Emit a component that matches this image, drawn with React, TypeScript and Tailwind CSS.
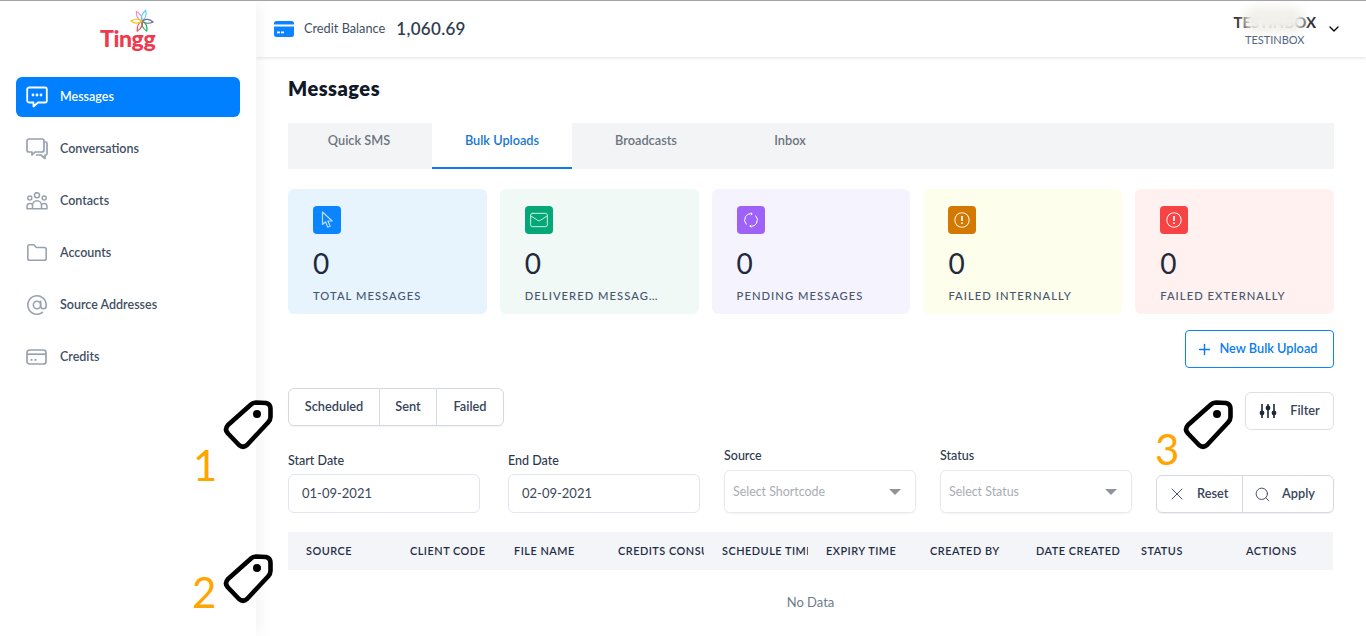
import { AtSign, ChevronDown, Folder, Mail, Plus, Search, X } from "lucide-react";
import type { ReactNode } from "react";

function MessageIcon() {
  return (
    <svg width="22" height="22" viewBox="0 0 22 22" fill="none" stroke="currentColor" strokeWidth="1.8" strokeLinejoin="round">
      <path d="M3 1.500h16a1.800 1.800 0 0 1 1.800 1.800v11.400a1.800 1.800 0 0 1-1.800 1.800h-7l-4.500 4v-4H3a1.800 1.800 0 0 1-1.800-1.800V3.300A1.800 1.800 0 0 1 3 1.500z" />
      <circle cx="7" cy="9" r="0.5" fill="currentColor" />
      <circle cx="11" cy="9" r="0.5" fill="currentColor" />
      <circle cx="15" cy="9" r="0.5" fill="currentColor" />
    </svg>
  );
}

function ConversationsIcon() {
  return (
    <svg width="22" height="22" viewBox="0 0 22 22" fill="none" stroke="currentColor" strokeWidth="1.7" strokeLinejoin="round">
      <path d="M3 1h13a2 2 0 0 1 2 2v9a2 2 0 0 1-2 2H9l-3 3v-3H3a2 2 0 0 1-2-2V3a2 2 0 0 1 2-2z" />
      <path d="M18 4h1.500A1.500 1.500 0 0 1 21 5.500v10a1.500 1.500 0 0 1-1.500 1.500H19v3.500L15 17h-5" />
    </svg>
  );
}

function ContactsIcon() {
  return (
    <svg width="22" height="18" viewBox="0 0 22 18" fill="none" stroke="currentColor" strokeWidth="1.5" strokeLinejoin="round">
      <circle cx="11" cy="3.200" r="2.500" />
      <circle cx="3.800" cy="6" r="2" />
      <circle cx="18.200" cy="6" r="2" />
      <path d="M6.500 16.800v-3.600a4.500 4.500 0 0 1 9 0v3.600z" />
      <path d="M6.500 16.800H1v-2.300a3 3 0 0 1 5.600-1.500" />
      <path d="M15.500 16.800H21v-2.300a3 3 0 0 0-5.600-1.500" />
    </svg>
  );
}

function CardIcon({ solid }: { solid?: boolean }) {
  if (solid) {
    return (
      <svg width="20" height="16" viewBox="0 0 20 16">
        <rect x="0" y="0" width="20" height="16" rx="2.500" fill="#0a84ff" />
        <rect x="0" y="3.500" width="20" height="2" fill="#fff" />
        <rect x="3" y="10.500" width="3" height="1.800" fill="#fff" />
        <rect x="7" y="10.500" width="3" height="1.800" fill="#fff" />
      </svg>
    );
  }
  return (
    <svg width="21" height="16" viewBox="0 0 21 16" fill="none" stroke="currentColor" strokeWidth="1.7">
      <rect x="1" y="1" width="19" height="14" rx="2.500" />
      <path d="M1 5.200h19" />
      <path d="M4.500 10.800h2M8.500 10.800h2" />
    </svg>
  );
}

function SlidersIcon() {
  return (
    <svg width="18" height="16" viewBox="0 0 18 16" fill="#1f2937" stroke="#1f2937" strokeWidth="1.600">
      <path d="M3 1v14M9 1v14M15 1v14" />
      <circle cx="3" cy="10" r="1.600" />
      <circle cx="9" cy="5" r="1.600" />
      <circle cx="15" cy="10" r="1.600" />
    </svg>
  );
}

function CursorIcon() {
  return (
    <svg width="13" height="18" viewBox="0 0 13 18" fill="none" stroke="#b9dcff" strokeWidth="1.200" strokeLinejoin="round">
      <path d="M1.500 1v12.500l3-2.700 2.300 5.400 2.400-1-2.300-5.200h4.300z" />
    </svg>
  );
}

function SyncIcon() {
  return (
    <svg width="16" height="16" viewBox="0 0 16 16" fill="none" stroke="#fff" strokeWidth="1" strokeLinecap="round" strokeLinejoin="round">
      <path d="M3.200 12.200A6.300 6.300 0 0 1 9 1.800" />
      <path d="M12.800 3.800A6.300 6.300 0 0 1 7 14.200" />
      <path d="M8 .9l1.100 1-1 1M8 15.100l-1.100-1 1-1" />
    </svg>
  );
}

function AlertIcon() {
  return (
    <svg width="16" height="16" viewBox="0 0 16 16" fill="none" stroke="#fff" strokeWidth="1.100" strokeOpacity="0.85">
      <circle cx="8" cy="8" r="7.200" />
      <path d="M8 4v5" strokeWidth="1.700" strokeOpacity="1" />
      <path d="M8 10.500v1.600" strokeWidth="1.700" strokeOpacity="1" />
    </svg>
  );
}

function TagMark({ className }: { className: string }) {
  return (
    <svg className={className} width="50" height="50" viewBox="0 0 50 50" fill="none">
      <path
        d="M33 2.500 L43 3 Q47.500 4 47.500 9 L47.500 17 Q47.500 20 45 22.500 L24 45 Q20 48.500 16 45 L5 33.500 Q1 29.500 5 25 L28 4.500 Q30 2.500 33 2.500 Z"
        stroke="#000"
        strokeWidth="4.600"
        strokeLinejoin="round"
        fill="#fff"
      />
      <circle cx="34" cy="14" r="4" fill="#000" />
    </svg>
  );
}

function Pinwheel() {
  const petals = [
    { angle: -30, color: "#f58ac6" },
    { angle: 20, color: "#4fd0f5" },
    { angle: 95, color: "#6b6a9c" },
    { angle: 155, color: "#16b25a" },
    { angle: 205, color: "#ef4056" },
    { angle: 270, color: "#f9c31c" },
  ];
  return (
    <svg width="24" height="24" viewBox="-13 -13 26 26" fill="none">
      {petals.map((p) => (
        <path
          key={p.angle}
          d="M0 0C-3-3-3-8 0-12C2.500-8 2.500-3 0 0z"
          stroke={p.color}
          strokeWidth="1.300"
          transform={`rotate(${p.angle})`}
        />
      ))}
    </svg>
  );
}

function NavItem({ icon, label, active }: { icon: ReactNode; label: string; active?: boolean }) {
  return (
    <div
      className={
        active
          ? "flex h-10 items-center rounded-md bg-[#0080ff] pl-2.5 text-white"
          : "flex h-10 items-center rounded-md pl-2.5 text-[#3f4f63]"
      }
    >
      <span className={active ? "flex w-[34px] justify-start" : "flex w-[34px] justify-start text-[#98a1ae]"}>{icon}</span>
      <span className="text-[12.500px] font-semibold">{label}</span>
    </div>
  );
}

function StatCard({ bg, iconBg, icon, label }: { bg: string; iconBg: string; icon: ReactNode; label: string }) {
  return (
    <div className={`h-[125px] rounded-md px-[25px] pt-[17px] ${bg}`}>
      <div className={`flex size-7 items-center justify-center rounded ${iconBg}`}>{icon}</div>
      <div className="mt-[10px] text-[28px] leading-[38px] text-[#1f2a3c]">0</div>
      <div className="mt-[6px] truncate text-[11.200px] leading-4 font-medium tracking-[1.050px] text-[#46566c]">{label}</div>
    </div>
  );
}

function SelectBox({ label, placeholder }: { label: string; placeholder: string }) {
  return (
    <div className="w-48">
      <div className="text-[12.500px] leading-[18px] font-medium text-[#2d3a4d]">{label}</div>
      <div className="mt-[5px] flex h-[43px] items-center justify-between rounded-md border border-[#e6e9ef] pr-[14px] pl-2 shadow-[0_1px_2px_rgba(0,0,0,0.05)]">
        <span className="pt-[2px] text-[12.400px] text-[#a9adb3]">{placeholder}</span>
        <span className="h-0 w-0 border-x-[6px] border-t-[6px] border-x-transparent border-t-[#8f949b]" />
      </div>
    </div>
  );
}

function DateBox({ label, value }: { label: string; value: string }) {
  return (
    <div className="w-48">
      <div className="text-[12.500px] leading-[18px] font-medium text-[#2d3a4d]">{label}</div>
      <div className="mt-[4px] flex h-[39px] items-center rounded-md border border-[#e1e6ef] pl-[13px] text-[13px] text-[#3a485c]">
        {value}
      </div>
    </div>
  );
}

const columns = [
  { name: "SOURCE", width: "w-[104px] pl-[18px] pr-[18px]" },
  { name: "CLIENT CODE", width: "w-[104px] pl-[18px] pr-[8px]" },
  { name: "FILE NAME", width: "w-[104px] pl-[18px] pr-[18px]" },
  { name: "CREDITS CONSUMED", width: "w-[104px] pl-[18px] pr-[18px]" },
  { name: "SCHEDULE TIME", width: "w-[104px] pl-[18px] pr-[18px]" },
  { name: "EXPIRY TIME", width: "w-[104px] pl-[18px] pr-[8px]" },
  { name: "CREATED BY", width: "w-[106px] pl-[18px] pr-[8px]" },
  { name: "DATE CREATED", width: "w-[105px] pl-[18px] pr-[4px]" },
  { name: "STATUS", width: "w-[105px] pl-[18px] pr-[18px]" },
  { name: "ACTIONS", width: "w-[105px] pl-[18px] pr-[18px]" },
];

export default function App() {
  return (
    <div className="relative flex h-[636px] overflow-hidden border-t border-[#a3a3a3] bg-white font-['Lato',sans-serif]">
      <aside className="relative z-10 w-[256px] shrink-0 bg-white px-4 shadow-[0_0_18px_rgba(0,0,0,0.07)]">
        <div className="relative mx-auto h-[76px] w-[56px]">
          <div className="absolute top-[8px] left-[30px]">
            <Pinwheel />
          </div>
          <div className="absolute top-[20px] left-0 text-[23px] leading-[34px] font-black tracking-[-0.4px] text-[#f0394d]">
            Tingg
          </div>
        </div>
        <nav className="flex flex-col gap-3">
          <NavItem active icon={<MessageIcon />} label="Messages" />
          <NavItem icon={<ConversationsIcon />} label="Conversations" />
          <NavItem icon={<ContactsIcon />} label="Contacts" />
          <NavItem icon={<Folder size={22} strokeWidth={1.7} />} label="Accounts" />
          <NavItem icon={<AtSign size={22} strokeWidth={1.7} />} label="Source Addresses" />
          <NavItem icon={<CardIcon />} label="Credits" />
        </nav>
      </aside>

      <div className="min-w-0 flex-1">
        <header className="flex h-[56px] items-center justify-between pr-[24px] pl-[18px] shadow-[0_1px_3px_rgba(0,0,0,0.12)]">
          <div className="flex items-center">
            <CardIcon solid />
            <span className="ml-[10px] text-[12.750px] text-[#3f4f63]">Credit Balance</span>
            <span className="ml-[11px] text-[17px] font-semibold tracking-[0.3px] text-[#2f3d50]">1,060.69</span>
          </div>
          <div className="flex items-center gap-[10px]">
            <div className="relative text-center">
              <div className="text-[15px] leading-[20px] font-bold text-[#2b2b2b]">TESTINBOX</div>
              <div className="absolute top-[-5px] left-[10px] h-[26px] w-[62px] rounded-full bg-[#f1f0ea] blur-[5px]" />
              <div className="relative text-[11px] leading-[15px] text-[#52677f]">TESTINBOX</div>
            </div>
            <ChevronDown size={16} strokeWidth={2} className="text-black" />
          </div>
        </header>

        <main className="pr-[32px] pl-[32px]">
          <h1 className="mt-[18px] text-[20px] leading-[26px] font-extrabold tracking-[0.5px] text-[#111827]">Messages</h1>

          <div className="mt-[22px] flex h-[46px] bg-[#f3f4f6] text-[12.750px] font-semibold text-[#6b7480]">
            <div className="w-[142px] pt-[8px] text-center">Quick SMS</div>
            <div className="ml-[2px] w-[140px] border-b-2 border-[#0a7cf0] bg-white pt-[8px] text-center text-[#1677d2]">Bulk Uploads</div>
            <div className="w-[148px] pt-[8px] text-center">Broadcasts</div>
            <div className="w-[140px] pt-[8px] text-center">Inbox</div>
          </div>

          <div className="mt-[20px] grid grid-cols-5 gap-[13px]">
            <StatCard bg="bg-[#e7f4fe]" iconBg="bg-[#0a84ff]" icon={<CursorIcon />} label="TOTAL MESSAGES" />
            <StatCard bg="bg-[#f0f9f6]" iconBg="bg-[#04a777]" icon={<Mail size={20} strokeWidth={1.2} className="text-[#c9f0e3]" />} label="DELIVERED MESSAG…" />
            <StatCard bg="bg-[#f5f3fe]" iconBg="bg-[#9f62f8]" icon={<SyncIcon />} label="PENDING MESSAGES" />
            <StatCard bg="bg-[#fefeec]" iconBg="bg-[#d37800]" icon={<AlertIcon />} label="FAILED INTERNALLY" />
            <StatCard bg="bg-[#fff1f0]" iconBg="bg-[#f74343]" icon={<AlertIcon />} label="FAILED EXTERNALLY" />
          </div>

          <div className="mt-4 flex justify-end">
            <button className="flex h-[38px] w-[149px] items-center justify-center gap-[7px] rounded border border-[#0a84ff] pr-[6px] text-[12.750px] font-semibold text-[#0a7cf0]">
              <Plus size={17} strokeWidth={2} />
              New Bulk Upload
            </button>
          </div>

          <div className="mt-5 flex items-start justify-between">
            <div className="flex h-[38px] rounded-md border border-[#d4d9e1] text-[12.750px] font-semibold text-[#36445a] shadow-[0_1px_1px_rgba(0,0,0,0.06)]">
              <div className="flex w-[91px] items-center justify-center border-r border-[#d4d9e1]">Scheduled</div>
              <div className="flex w-[57px] items-center justify-center border-r border-[#d4d9e1]">Sent</div>
              <div className="flex w-[66px] items-center justify-center">Failed</div>
            </div>
            <button className="mt-1 flex h-[38px] w-[89px] items-center justify-center gap-[13px] rounded-md border border-[#dce0e6] text-[12.750px] font-semibold text-[#36445a]">
              <SlidersIcon />
              Filter
            </button>
          </div>

          <div className="mt-[17px] flex items-end">
            <DateBox label="Start Date" value="01-09-2021" />
            <div className="ml-7">
              <DateBox label="End Date" value="02-09-2021" />
            </div>
            <div className="ml-6">
              <SelectBox label="Source" placeholder="Select Shortcode" />
            </div>
            <div className="ml-6">
              <SelectBox label="Status" placeholder="Select Status" />
            </div>
            <div className="ml-6 flex h-[38px] w-[178px] rounded-md border border-[#d4d9e1] text-[12.750px] font-semibold text-[#36445a] shadow-[0_1px_1px_rgba(0,0,0,0.06)]">
              <div className="flex w-[86px] items-center gap-[10px] border-r border-[#d4d9e1] pl-[10px]">
                <X size={20} strokeWidth={1.1} />
                Reset
              </div>
              <div className="flex flex-1 items-center gap-[11px] pl-[11px]">
                <Search size={17} strokeWidth={1.3} />
                Apply
              </div>
            </div>
          </div>

          <div className="mt-[19px] flex h-[38px] w-[1045px] items-center bg-[#f4f5f9] text-[10.900px] font-semibold tracking-[0.5px] text-[#1f2d44]">
            {columns.map((c) => (
              <div key={c.name} className={`${c.width} overflow-hidden whitespace-nowrap`}>
                {c.name}
              </div>
            ))}
          </div>
          <div className="mt-[23px] w-[1045px] text-center text-[13px] text-[#6e7b8b]">No Data</div>
        </main>
      </div>

      <TagMark className="absolute top-[399px] left-[223px] z-20" />
      <TagMark className="absolute top-[553px] left-[223px] z-20" />
      <TagMark className="absolute top-[399px] left-[1183px] z-20" />
      <span className="absolute top-[439px] left-[193px] z-20 text-[42px] leading-[50px] text-[#ffa500]">1</span>
      <span className="absolute top-[566px] left-[192px] z-20 text-[42px] leading-[50px] text-[#ffa500]">2</span>
      <span className="absolute top-[423px] left-[1155px] z-20 text-[42px] leading-[50px] text-[#ffa500]">3</span>
    </div>
  );
}
